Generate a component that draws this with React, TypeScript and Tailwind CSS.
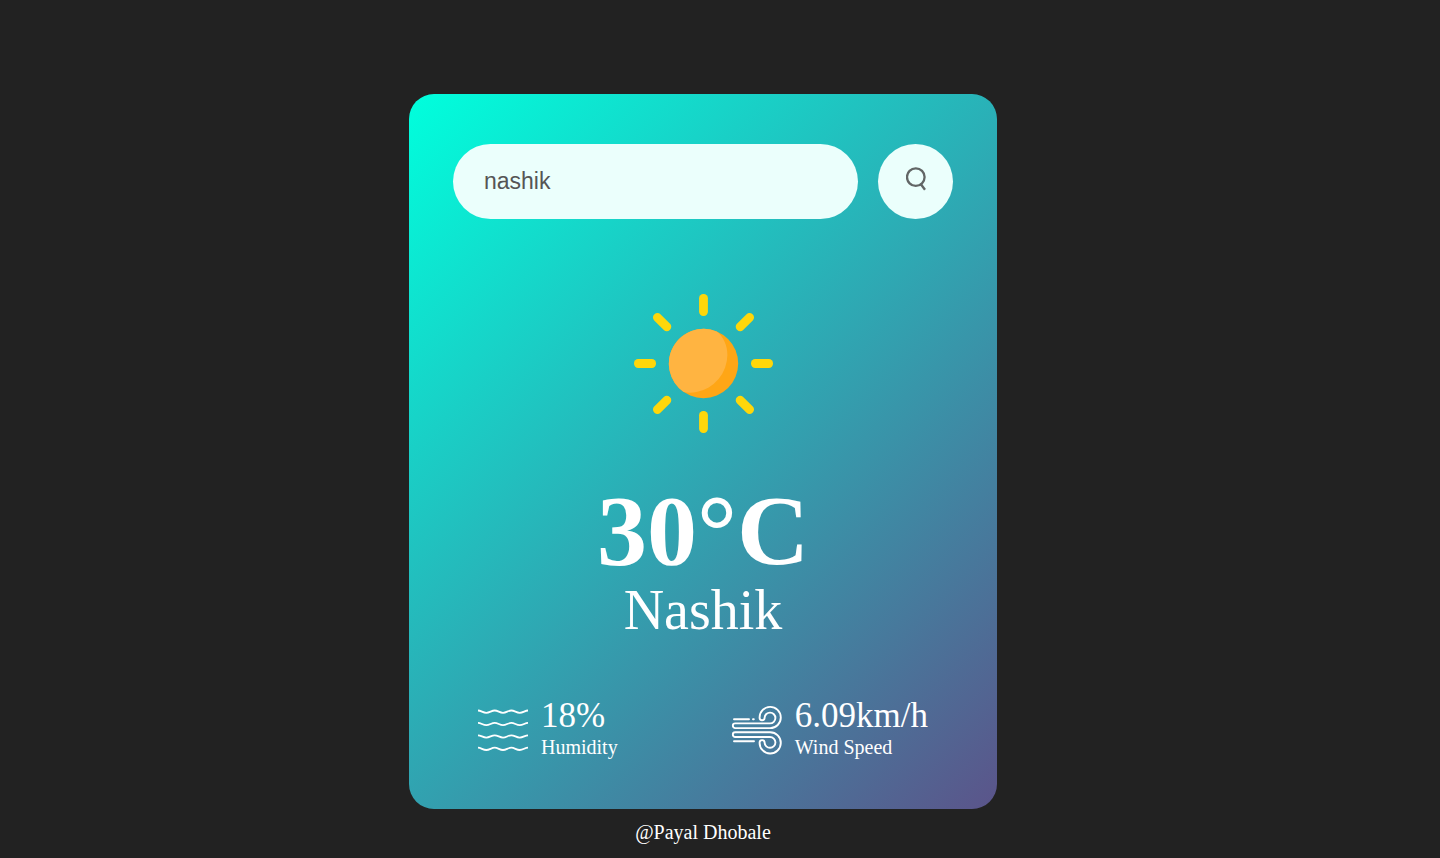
import { useState } from "react";

const rays = [0, 45, 90, 135, 180, 225, 270, 315];
const waves = [4, 16.4, 28.8, 41.2];

function SunIcon() {
  return (
    <svg className="size-[140px]" viewBox="-0.5 -0.5 140 140" role="img" aria-label="Clear sky">
      {rays.map((angle) => (
        <rect key={angle} x="65.6" y="0.5" width="8.8" height="22" rx="4.2" fill="#ffd70a" transform={`rotate(${angle} 70 70)`} />
      ))}
      <circle cx="70" cy="70" r="34.7" fill="#ffa616" />
      <path d="M83.2 37.9A34.7 34.7 0 0 0 49.8 98.2C54 99.6 58 99.5 63 98.5A38 38 0 0 0 93.9 61.5C93.9 52 90 43 83.2 37.9Z" fill="#ffb441" />
    </svg>
  );
}

function SearchIcon() {
  return (
    <svg className="h-6 w-5" viewBox="0 0 20 24" fill="none" stroke="#626666" strokeWidth="2.3" aria-hidden="true">
      <circle cx="9.8" cy="10.1" r="8.8" />
      <path d="M14.5 16.8L19 22.8" />
    </svg>
  );
}

function HumidityIcon() {
  return (
    <svg className="h-12 w-[50px]" viewBox="0 0 50 48" fill="none" stroke="#fff" strokeWidth="1.8" aria-hidden="true">
      {waves.map((y) => (
        <path
          key={y}
          d={`M0 ${y + 0.5}C3 ${y + 0.5} 5 ${y + 2.8} 8.3 ${y + 2.8}S13.5 ${y + 0.5} 16.7 ${y + 0.5}S21.7 ${y + 2.8} 25 ${y + 2.8}S30 ${y + 0.5} 33.3 ${y + 0.5}S38.3 ${y + 2.8} 41.7 ${y + 2.8}S47 ${y + 0.5} 50 ${y + 0.5}`}
        />
      ))}
    </svg>
  );
}

function WindIcon() {
  return (
    <svg className="h-12 w-[50px] overflow-visible" viewBox="0 0 50 48" fill="none" stroke="#fff" strokeWidth="1.9" strokeLinecap="round" aria-hidden="true">
      <path d="M2 13.3H17M21 13.3H21.8" />
      <path d="M3.2 17.4H38A5.4 5.4 0 1 0 32.6 11.8A2.5 2.5 0 0 1 27.6 11.8A10.6 10.6 0 1 1 38.2 22.1H3.2A2.35 2.35 0 0 1 3.2 17.4Z" />
      <path d="M3.2 26.3H38.2A10.6 10.6 0 1 1 27.6 36.6A2.5 2.5 0 0 1 32.6 36.6A5.4 5.4 0 1 0 38 31H3.2A2.35 2.35 0 0 1 3.2 26.3Z" />
      <path d="M2 35.3H22" />
    </svg>
  );
}

export default function App() {
  const [city, setCity] = useState("nashik");
  return (
    <div className="min-h-screen bg-[#222222] pt-[94px] pr-[34px] font-['Liberation_Serif',serif] text-white">
      <main className="mx-auto w-full max-w-[588px] rounded-[25px] bg-[linear-gradient(135deg,#00ffdd,#5b548a)] px-11 py-[50px] text-center">
        <form className="flex items-center gap-5" onSubmit={(event) => event.preventDefault()}>
          <input
            className="h-[75px] min-w-0 flex-1 rounded-full bg-[#ebfffc] px-[31px] font-['Liberation_Sans',sans-serif] text-[23px] text-[#555555] outline-none"
            type="text"
            aria-label="City name"
            value={city}
            onChange={(event) => setCity(event.target.value)}
          />
          <button className="flex size-[75px] items-center justify-center rounded-full bg-[#ebfffc] pb-1.5" type="submit" aria-label="Search">
            <SearchIcon />
          </button>
        </form>

        <section className="flex flex-col items-center pt-[74px]">
          <SunIcon />
          <h1 className="mt-[47px] text-[100px] leading-[102px] font-bold">30°C</h1>
          <h2 className="text-[56px] leading-[56px]">Nashik</h2>
        </section>

        <section className="mt-[58px] flex items-center justify-between px-[25px] text-left">
          <div className="flex items-center gap-[13px]">
            <div className="pt-[5px]">
              <HumidityIcon />
            </div>
            <div>
              <p className="text-[35px] leading-10">18%</p>
              <p className="text-xl leading-[23px]">Humidity</p>
            </div>
          </div>
          <div className="flex items-center gap-[13px]">
            <div className="pt-[5px]">
              <WindIcon />
            </div>
            <div>
              <p className="text-[35px] leading-10">6.09km/h</p>
              <p className="text-xl leading-[23px]">Wind Speed</p>
            </div>
          </div>
        </section>
      </main>
      <footer className="pt-3 text-center text-xl leading-[23px]">@Payal Dhobale</footer>
    </div>
  );
}
